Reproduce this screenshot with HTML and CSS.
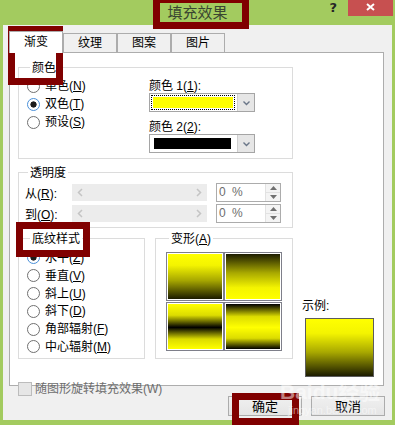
FILE: index.html
```html
<!DOCTYPE html>
<html lang="zh-CN">
<head>
<meta charset="UTF-8">
<title>填充效果</title>
<link rel="stylesheet" href="styles.css">
</head>
<body>

<div class="window">
<div class="titlebar">
<span></span>
<div class="title">填充效果</div>
<div class="caption-btns">
<span class="help">?</span>
<span class="close"><svg width="9" height="8" viewBox="0 0 9 8"><path d="M1 1L8 7M8 1L1 7" stroke="#fff" stroke-width="2"/></svg></span>
</div>
</div>

<div class="client">
<div class="tabs">
<div class="tab active">渐变</div>
<div class="tab">纹理</div>
<div class="tab">图案</div>
<div class="tab">图片</div>
</div>

<div class="panel">
<!-- colours -->
<div class="group group-colors">
<div class="group-title">颜色</div>
<div class="colors-body">
<div class="radio-list">
<div class="radio"><span class="radio-dot"></span><span>单色(<u>N</u>)</span></div>
<div class="radio on"><span class="radio-dot"></span><span>双色(<u>T</u>)</span></div>
<div class="radio"><span class="radio-dot"></span><span>预设(<u>S</u>)</span></div>
</div>
<div class="color-pick">
<div class="field-label">颜色 1(<u>1</u>):</div>
<div class="dropdown">
<div class="value focused"><span class="fill yellow"></span></div>
<div class="drop-btn"><svg width="7" height="5" viewBox="0 0 7 5"><path d="M0.5 0.5L3.5 3.5L6.5 0.5" fill="none" stroke="#6a7688" stroke-width="1.4"/></svg></div>
</div>
<div class="field-label second">颜色 2(<u>2</u>):</div>
<div class="dropdown">
<div class="value"><span class="fill black"></span></div>
<div class="drop-btn"><svg width="7" height="5" viewBox="0 0 7 5"><path d="M0.5 0.5L3.5 3.5L6.5 0.5" fill="none" stroke="#6a7688" stroke-width="1.4"/></svg></div>
</div>
</div>
</div>
</div>

<!-- transparency -->
<div class="group group-alpha">
<div class="group-title">透明度</div>
<div class="alpha-body">
<div class="alpha-row">
<span class="alpha-label">从(<u>R</u>):</span>
<div class="slider">
<svg width="6" height="9" viewBox="0 0 6 9"><path d="M5 1L1.5 4.5L5 8" fill="none" stroke="#c4c4c4" stroke-width="1.5"/></svg>
<svg width="6" height="9" viewBox="0 0 6 9"><path d="M1 1L4.5 4.5L1 8" fill="none" stroke="#c4c4c4" stroke-width="1.5"/></svg>
</div>
<div class="spin">
<span class="spin-val">0 %</span>
<div class="spin-btns">
<span><svg width="7" height="4" viewBox="0 0 7 4"><path d="M0 4L3.5 0L7 4Z" fill="#707070"/></svg></span>
<span><svg width="7" height="4" viewBox="0 0 7 4"><path d="M0 0L3.5 4L7 0Z" fill="#707070"/></svg></span>
</div>
</div>
</div>
<div class="alpha-row">
<span class="alpha-label">到(<u>O</u>):</span>
<div class="slider">
<svg width="6" height="9" viewBox="0 0 6 9"><path d="M5 1L1.5 4.5L5 8" fill="none" stroke="#c4c4c4" stroke-width="1.5"/></svg>
<svg width="6" height="9" viewBox="0 0 6 9"><path d="M1 1L4.5 4.5L1 8" fill="none" stroke="#c4c4c4" stroke-width="1.5"/></svg>
</div>
<div class="spin">
<span class="spin-val">0 %</span>
<div class="spin-btns">
<span><svg width="7" height="4" viewBox="0 0 7 4"><path d="M0 4L3.5 0L7 4Z" fill="#707070"/></svg></span>
<span><svg width="7" height="4" viewBox="0 0 7 4"><path d="M0 0L3.5 4L7 0Z" fill="#707070"/></svg></span>
</div>
</div>
</div>
</div>
</div>

<div class="bottom-row">
<div class="group group-pattern">
<div class="group-title">底纹样式</div>
<div class="pattern-body">
<div class="radio on"><span class="radio-dot"></span><span>水平(<u>Z</u>)</span></div>
<div class="radio"><span class="radio-dot"></span><span>垂直(<u>V</u>)</span></div>
<div class="radio"><span class="radio-dot"></span><span>斜上(<u>U</u>)</span></div>
<div class="radio"><span class="radio-dot"></span><span>斜下(<u>D</u>)</span></div>
<div class="radio"><span class="radio-dot"></span><span>角部辐射(<u>F</u>)</span></div>
<div class="radio"><span class="radio-dot"></span><span>中心辐射(<u>M</u>)</span></div>
</div>
</div>

<div class="group group-variant">
<div class="group-title">变形(<u>A</u>)</div>
<div class="variants">
<div class="variant"><span class="grad g-down"></span></div>
<div class="variant"><span class="grad g-up"></span></div>
<div class="variant"><span class="grad g-mid-dark"></span></div>
<div class="variant"><span class="grad g-mid-light"></span></div>
</div>
</div>

<div class="sample-col">
<div class="field-label">示例:</div>
<div class="sample"></div>
</div>
</div>

<div class="check-row">
<span class="check"></span><span>随图形旋转填充效果(W)</span>
</div>
</div>

<div class="buttons">
<button class="btn">确定</button>
<button class="btn">取消</button>
</div>
</div>
</div>

<!-- annotation boxes drawn over the screenshot -->
<div class="mark mark-title"></div>
<div class="mark mark-tab"></div>
<div class="mark mark-pattern"></div>
<div class="mark mark-ok"></div>

<div class="watermark">
<span class="wm-big">Bai<b>du</b>经验</span>
<span class="wm-small">jingyan.baidu.com</span>
</div>

</body>
</html>
```

FILE: styles.css
```css
* {
box-sizing: border-box;
}
body {
margin: 0;
width: 395px;
height: 425px;
overflow: hidden;
position: relative;
background-color: #a3cb5f; /* window frame green */
font-family: "Liberation Sans", "Noto Sans CJK SC", sans-serif;
font-size: 12px;
color: #000;
}

/* title bar */
.titlebar {
height: 25px;
display: grid;
grid-template-columns: 1fr auto 1fr;
}
.title {
font-family: "Noto Sans CJK SC", sans-serif;
font-size: 15px;
line-height: 24px;
color: #3a4631;
}
.caption-btns {
display: flex;
justify-content: flex-end;
align-items: flex-start;
}
.help {
font-family: "DejaVu Sans", sans-serif;
font-weight: bold;
font-size: 13px;
line-height: 15px;
color: #262626;
}
.close {
width: 45px;
height: 16px;
margin: 0 2px 0 11px;
background-color: #c75050;
display: flex;
justify-content: center;
padding-top: 3px;
}

/* dialog body */
.client {
margin: 0 3px;
height: 395px;
background-color: #f0f0f0;
padding: 6px 7px 0 6px;
}
.tabs {
display: flex;
align-items: flex-end;
height: 21px;
position: relative;
z-index: 1;
}
.tab {
width: 54px;
height: 19px;
border: 1px solid #acacac;
border-bottom: none;
background-color: #f0f0f0;
text-align: center;
line-height: 18px;
}
.tab.active {
height: 22px;
margin-bottom: -1px;
background-color: #fff;
line-height: 21px;
}
.panel {
width: 375px;
height: 334px;
border: 1px solid #adadad;
background-color: #fff;
padding: 14px 0 0 8px;
}

/* group boxes */
.group {
border: 1px solid #dcdcdc;
}
.group-title {
width: fit-content;
margin: -7px 0 0 3px;
padding: 0 2px;
background-color: #fff;
line-height: 14px;
}
.field-label {
line-height: 14px;
}

.group-colors {
width: 275px;
padding: 0 0 5px 8px;
}
.colors-body {
display: grid;
grid-template-columns: 122px auto;
padding-top: 2px;
}
.radio {
display: flex;
align-items: center;
gap: 5px;
height: 18px;
line-height: 18px;
}
.radio-dot {
flex: none;
width: 13px;
height: 13px;
border: 1px solid #707070;
border-radius: 50%;
background-color: #fff;
}
.radio.on .radio-dot {
border-color: #4a90d9;
background: radial-gradient(circle, #1c1c1c 0 2.8px, #fff 3.4px);
}
.color-pick {
padding-top: 2px;
}
.field-label.second {
margin-top: 8px;
}
.dropdown {
display: flex;
width: 106px;
height: 19px;
border: 1px solid #a5a5a5;
background-color: #fff;
}
.dropdown .value {
flex: 1;
margin: 1px 2px 1px 1px;
padding: 1px;
border: 1px solid transparent;
display: flex;
}
.dropdown .value.focused {
border: 1px dotted #000;
}
.fill {
flex: 1;
}
.fill.yellow {
background-color: #ffff00;
}
.fill.black {
background-color: #000;
margin: 0 2px 0 1px;
}
.drop-btn {
width: 17px;
background-color: #e6e6e6;
border-left: 1px solid #cfcfcf;
display: flex;
align-items: center;
justify-content: center;
padding-top: 2px;
}

/* transparency */
.group-alpha {
width: 275px;
margin-top: 13px;
padding: 0 0 5px 6px;
}
.alpha-body {
display: flex;
flex-direction: column;
gap: 3px;
padding-top: 3px;
}
.alpha-row {
display: flex;
align-items: center;
height: 18px;
}
.alpha-label {
width: 47px;
}
.slider {
width: 135px;
height: 17px;
margin-right: 9px;
padding: 0 5px;
background-color: #ececec;
display: flex;
align-items: center;
justify-content: space-between;
}
.spin {
width: 65px;
height: 19px;
border: 1px solid #acacac;
background-color: #fff;
display: flex;
}
.spin-val {
flex: 1;
padding-left: 2px;
color: #6d6d6d;
line-height: 17px;
word-spacing: 3px;
}
.spin-btns {
width: 15px;
display: flex;
flex-direction: column;
background-color: #f4f4f4;
border-left: 1px solid #e2e2e2;
}
.spin-btns span {
flex: 1;
display: flex;
align-items: center;
justify-content: center;
}
.spin-btns span + span {
border-top: 1px solid #e2e2e2;
}

/* shading styles, variants, sample */
.bottom-row {
display: flex;
align-items: flex-start;
margin-top: 10px;
}
.group-pattern {
width: 127px;
height: 121px;
padding-left: 8px;
}
.pattern-body {
padding-top: 3px;
}
.pattern-body .radio {
height: 17.8px;
}
.group-variant {
width: 138px;
height: 121px;
margin-left: 10px;
padding-left: 10px;
}
.variants {
display: grid;
grid-template-columns: 58px 58px;
grid-template-rows: 49px 49px;
row-gap: 1px;
margin-top: 6px;
}
.variant {
border: 1px solid #7e7f8a;
padding: 1px;
display: flex;
}
.grad {
flex: 1;
}
.g-down {
background: linear-gradient(#ffff00, #f4f400 25%, #a9a900 58%, #1c1c00);
}
.g-up {
background: linear-gradient(#1c1c00, #a9a900 42%, #f4f400 75%, #ffff00);
}
.g-mid-dark {
background: linear-gradient(#ffff00, #dcdc00 25%, #000 52%, #dcdc00 78%, #ffff00);
}
.g-mid-light {
background: linear-gradient(#000, #dcdc00 28%, #ffff00 52%, #dcdc00 76%, #000);
}
.sample-col {
margin-left: 9px;
padding-top: 61px;
}
.sample {
width: 69px;
height: 59px;
margin: 5px 0 0 3px;
border: 1px solid #5c5c5c;
background: linear-gradient(#ffff00, #f4f400 25%, #a9a900 58%, #1c1c00);
}

.check-row {
display: flex;
align-items: center;
gap: 3px;
height: 14px;
margin-top: 5px;
color: #6d6d6d;
line-height: 14px;
}
.check {
width: 14px;
height: 14px;
border: 1px solid #bcbcbc;
background-color: #e6e6e6;
}

/* OK / Cancel */
.buttons {
display: flex;
justify-content: flex-end;
gap: 9px;
margin-top: 10px;
}
.btn {
width: 74px;
height: 20px;
padding: 0;
border: 1px solid #acacac;
background: linear-gradient(#f0f0f0, #e5e5e5);
font-family: "Noto Sans CJK SC", sans-serif;
font-size: 13px;
line-height: 18px;
color: #000;
}

/* dark red highlight boxes */
.mark {
position: absolute;
border: 7px solid #800000;
}
.mark-title {
left: 153px;
top: -4px;
width: 96px;
height: 33px;
}
.mark-tab {
left: 8px;
top: 26px;
width: 55px;
height: 59px;
}
.mark-pattern {
left: 16px;
top: 222px;
width: 74px;
height: 35px;
}
.mark-ok {
left: 232px;
top: 393px;
width: 67px;
height: 32px;
}

.watermark {
position: absolute;
left: 280px;
top: 380px;
display: flex;
flex-direction: column;
color: rgba(255, 255, 255, 0.5);
}
.wm-big {
font-size: 21px;
font-weight: bold;
line-height: 24px;
}
.wm-small {
font-size: 11px;
line-height: 12px;
margin-left: 8px;
}
```
